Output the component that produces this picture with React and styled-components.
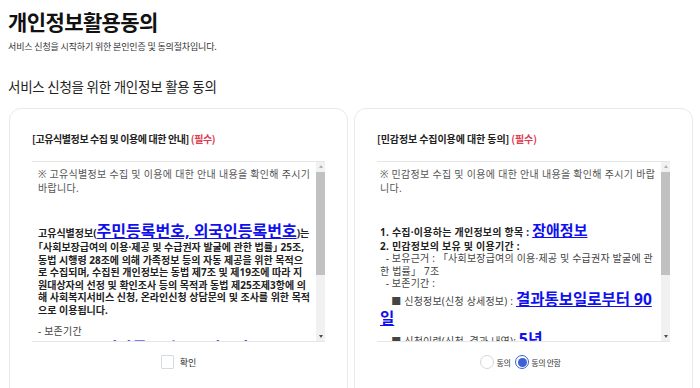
import React, { useState } from "react";
import styled, { createGlobalStyle } from "styled-components";

const GlobalStyle = createGlobalStyle`
  html, body { margin: 0; padding: 0; background: #fff; }
  body {
    font-family: "Noto Sans CJK KR", "Noto Sans", sans-serif;
    color: #222;
    overflow: hidden;
  }
  * { box-sizing: border-box; }
`;

const Page = styled.div`
  padding: 6px 7px 0 8px;
`;

const Title = styled.h1`
  margin: 0;
  font-size: 21px;
  line-height: 30px;
  font-weight: 700;
  letter-spacing: -0.6px;
  color: #111;
`;

const Subtitle = styled.p`
  margin: 4px 0 0;
  font-size: 9px;
  line-height: 14px;
  letter-spacing: -0.15px;
  color: #333;
`;

const SectionTitle = styled.h2`
  margin: 22px 0 0;
  font-size: 13.5px;
  line-height: 20px;
  font-weight: 400;
  letter-spacing: -0.25px;
  color: #222;
`;

const CardRow = styled.div`
  margin-top: 12px;
  display: grid;
  grid-template-columns: 1fr 1fr;
  gap: 6px;
  padding-left: 1px;
`;

const Card = styled.section`
  border: 1px solid #e9e9e9;
  border-radius: 12px;
  padding: 23px 22px 0 22px;
  height: 300px;
`;

const CardHeader = styled.h3`
  margin: 0 0 15px;
  font-size: 10px;
  line-height: 14px;
  font-weight: 700;
  letter-spacing: ${(p) => p.$ls || "-0.4px"};
  color: #222;
`;

const Required = styled.span`
  color: #e03a4e;
`;

const ScrollBox = styled.div`
  display: flex;
  height: 181px;
  border-top: 1px solid #e6e6e6;
  border-bottom: 1px solid #e6e6e6;
`;

const ScrollContent = styled.div`
  flex: 1;
  min-width: 0;
  overflow: hidden;
  padding: ${(p) => p.$pad};
  font-family: "Noto Sans", "Noto Sans CJK KR", sans-serif;
  font-size: 10px;
  word-break: break-all;
`;

const Scrollbar = styled.div`
  width: 9px;
  flex: none;
  display: flex;
  flex-direction: column;
  background: #f1f1f1;
`;

const Arrow = styled.div`
  height: 9px;
  flex: none;
  display: flex;
  align-items: center;
  justify-content: center;
  &::before {
    content: "";
    width: 0;
    height: 0;
    border-left: 2.5px solid transparent;
    border-right: 2.5px solid transparent;
    ${(p) =>
      p.$down
        ? `border-top: 3px solid #505050;`
        : `border-bottom: 3px solid #b0b0b0;`}
  }
`;

const Track = styled.div`
  flex: 1;
  padding: 1px 0 0;
`;

const Thumb = styled.div`
  height: 103px;
  background: #c1c1c1;
`;

const Notice = styled.p`
  margin: 0;
  line-height: 14px;
  letter-spacing: 0.3px;
  color: #555;
`;

const Body = styled.p`
  margin: ${(p) => p.$mt || "0"} 0 0;
  line-height: 1.25;
  font-weight: ${(p) => (p.$bold ? 700 : 400)};
  letter-spacing: ${(p) => (p.$bold ? "0" : "0.2px")};
  color: ${(p) => (p.$bold ? "#222" : "#444")};
  font-feature-settings: ${(p) => (p.$bold ? '"halt"' : "normal")};
`;

const Strong = styled.span`
  font-weight: 700;
  letter-spacing: 0.25px;
  color: #222;
`;

const Em = styled.span`
  font-size: ${(p) => p.$size || 16}px;
  font-weight: 700;
  color: #1010ee;
  text-decoration: underline;
  letter-spacing: 0;
`;

const Footer = styled.div`
  height: 40px;
  display: flex;
  justify-content: center;
  align-items: center;
  gap: ${(p) => p.$gap || 6}px;
  padding-right: ${(p) => p.$shift || 0}px;
  font-size: 9px;
  color: #333;
`;

const CheckBox = styled.span`
  width: 13px;
  height: 14px;
  border: 1px solid #d5dbe3;
  border-radius: 1px;
  background: #fff;
`;

const RadioLabel = styled.label`
  display: flex;
  align-items: center;
  gap: 2px;
  font-size: 8px;
  letter-spacing: -0.4px;
  cursor: pointer;
`;

const RadioCircle = styled.span`
  width: 14px;
  height: 14px;
  border-radius: 50%;
  border: 1px solid ${(p) => (p.$on ? "#3a62d6" : "#d6d6d6")};
  background: #fff;
  display: flex;
  align-items: center;
  justify-content: center;
  &::after {
    content: "";
    width: 9px;
    height: 9px;
    border-radius: 50%;
    background: ${(p) => (p.$on ? "#3a62d6" : "transparent")};
  }
`;

const sp = "\u00a0";

function FakeScrollbar() {
  return (
    <Scrollbar>
      <Arrow />
      <Track>
        <Thumb />
      </Track>
      <Arrow $down />
    </Scrollbar>
  );
}

export default function App() {
  const [agree, setAgree] = useState("no");
  return (
    <>
      <GlobalStyle />
      <Page>
        <Title>개인정보활용동의</Title>
        <Subtitle>서비스 신청을 시작하기 위한 본인인증 및 동의절차입니다.</Subtitle>
        <SectionTitle>서비스 신청을 위한 개인정보 활용 동의</SectionTitle>
        <CardRow>
          <Card>
            <CardHeader>
              [고유식별정보 수집 및 이용에 대한 안내] <Required>(필수)</Required>
            </CardHeader>
            <ScrollBox>
              <ScrollContent $pad="5px 5px 0 6px">
                <Notice>※ 고유식별정보 수집 및 이용에 대한 안내 내용을 확인해 주시기 바랍니다.</Notice>
                <Body $bold $mt="26px">
                  고유식별정보(<Em>주민등록번호, 외국인등록번호</Em>)는 「사회보장급여의 이용·제공 및 수급권자 발굴에 관한 법률」 25조, 동법 시행령 28조에 의해 가족정보 등의 자동 제공을 위한 목적으로 수집되며, 수집된 개인정보는 동법 제7조 및 제19조에 따라 지원대상자의 선정 및 확인조사 등의 목적과 동법 제25조제3항에 의해 사회복지서비스 신청, 온라인신청 상담문의 및 조사를 위한 목적으로 이용됩니다.
                </Body>
                <Body $mt="9px">- 보존기간</Body>
                <Body>
                  {sp}{sp}■ 신청정보 : <Em>결과통보일로부터 5년</Em>
                </Body>
                <Body>
                  {sp}{sp}■ 신청이력 : <Em>5년</Em>
                </Body>
              </ScrollContent>
              <FakeScrollbar />
            </ScrollBox>
            <Footer>
              <CheckBox />
              <span>확인</span>
            </Footer>
          </Card>
          <Card>
            <CardHeader $ls="-0.1px">
              [민감정보 수집이용에 대한 동의] <Required>(필수)</Required>
            </CardHeader>
            <ScrollBox>
              <ScrollContent $pad="5px 5px 0 3px">
                <Notice>※ 민감정보 수집 및 이용에 대한 안내 내용을 확인해 주시기 바랍니다.</Notice>
                <Body $mt="26px">
                  <Strong>1. 수집·이용하는 개인정보의 항목 : </Strong>
                  <Em $size={15}>장애정보</Em>
                  <br />
                  <Strong>2. 민감정보의 보유 및 이용기간 :</Strong>
                  <br />
                  {sp}{sp}- 보유근거 : 「사회보장급여의 이용·제공 및 수급권자 발굴에 관한 법률」 7조
                  <br />
                  {sp}{sp}- 보존기간 :
                  <br />
                  {sp}{sp}{sp}{sp}■ 신청정보(신청 상세정보) : <Em $size={15.5}>결과통보일로부터 90일</Em>
                  <br />
                  {sp}{sp}{sp}{sp}■ 신청이력(신청, 결과 내역): <Em>5년</Em>
                </Body>
              </ScrollContent>
              <FakeScrollbar />
            </ScrollBox>
            <Footer $gap={5} $shift={6}>
              <RadioLabel onClick={() => setAgree("yes")}>
                <RadioCircle $on={agree === "yes"} />
                <span>동의</span>
              </RadioLabel>
              <RadioLabel onClick={() => setAgree("no")}>
                <RadioCircle $on={agree === "no"} />
                <span>동의 안함</span>
              </RadioLabel>
            </Footer>
          </Card>
        </CardRow>
      </Page>
    </>
  );
}
